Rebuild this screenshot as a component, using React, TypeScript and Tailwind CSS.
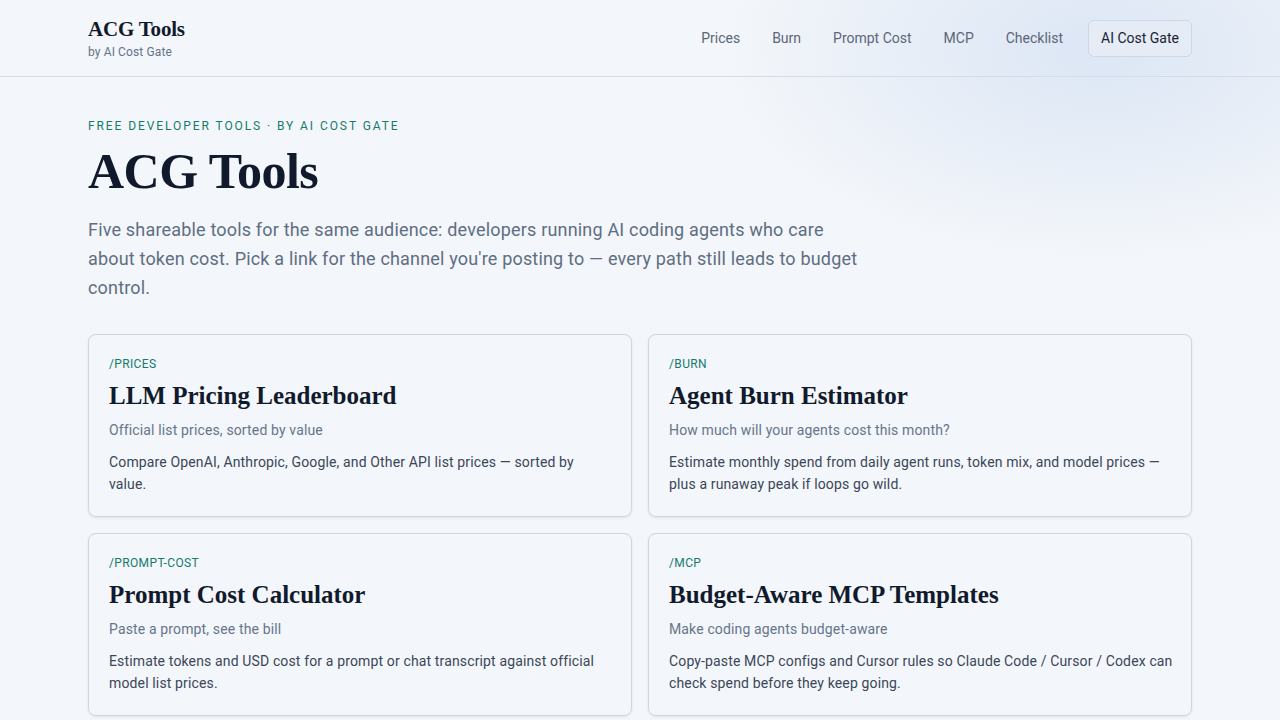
import React from 'react';

const sans = "font-['Roboto','Inter',sans-serif]";
const serif = "font-['Liberation_Serif','DejaVu_Serif',serif]";

const navItems = ['Prices', 'Burn', 'Prompt Cost', 'MCP', 'Checklist'];

const tools = [
  {
    path: '/PRICES',
    title: 'LLM Pricing Leaderboard',
    tagline: 'Official list prices, sorted by value',
    body: 'Compare OpenAI, Anthropic, Google, and Other API list prices — sorted by value.',
  },
  {
    path: '/BURN',
    title: 'Agent Burn Estimator',
    tagline: 'How much will your agents cost this month?',
    body: 'Estimate monthly spend from daily agent runs, token mix, and model prices — plus a runaway peak if loops go wild.',
  },
  {
    path: '/PROMPT-COST',
    title: 'Prompt Cost Calculator',
    tagline: 'Paste a prompt, see the bill',
    body: 'Estimate tokens and USD cost for a prompt or chat transcript against official model list prices.',
  },
  {
    path: '/MCP',
    title: 'Budget-Aware MCP Templates',
    tagline: 'Make coding agents budget-aware',
    body: 'Copy-paste MCP configs and Cursor rules so Claude Code / Cursor / Codex can check spend before they keep going.',
  },
];

export default function App() {
  return (
    <div className={`min-h-screen bg-[#f3f6fa] text-[#0f1b2d] ${sans} relative overflow-hidden`}>
      {/* soft glow top right */}
      <div className="pointer-events-none absolute -top-40 right-[-200px] w-[760px] h-[420px] rounded-full bg-[radial-gradient(ellipse_at_center,rgba(191,210,238,0.45),rgba(243,246,250,0)_70%)]" />

      <header className="relative border-b border-[#d3dce8]">
        <div className="mx-auto w-[1104px] h-[76px] flex items-center justify-between">
          <div className="flex flex-col">
            <span className={`${serif} text-[21px] font-bold leading-[26px] tracking-[-0.2px] text-[#111a2c]`}>ACG Tools</span>
            <span className="text-[12px] leading-[16px] tracking-[0.01em] text-[#64748b] mt-[2px]">by AI Cost Gate</span>
          </div>
          <nav className="flex items-center gap-2 text-[14px] text-[#5b6678]">
            {navItems.map(n => (
              <a key={n} className="px-[12px] py-[7px]">{n}</a>
            ))}
            <a className="ml-[5px] px-[12px] py-[7px] rounded-md border border-[#cfd9e6] bg-[#e6ecf5] text-[#1a2334]">AI Cost Gate</a>
          </nav>
        </div>
      </header>

      <main className="relative mx-auto w-[1104px] pt-[41px]">
        <p className="text-[12px] leading-[16px] tracking-[0.16em] uppercase text-[#167a6e]">Free developer tools · by AI Cost Gate</p>
        <h1 className={`${serif} text-[50px] leading-[56px] font-bold tracking-[-0.5px] text-[#111a2c] mt-[9px]`}>ACG Tools</h1>
        <p className="mt-[16px] max-w-[780px] text-[18px] leading-[29px] tracking-[0.01em] text-[#5f6e82]">
          Five shareable tools for the same audience: developers running AI coding agents who care about token cost. Pick a link for the channel you're posting to — every path still leads to budget control.
        </p>

        <div className="mt-[32px] grid grid-cols-2 gap-4">
          {tools.map(t => (
            <div key={t.path} className="h-[183px] rounded-lg border border-[#cdd7e4] bg-[#f3f6fa] shadow-[0_1px_3px_rgba(15,27,45,0.08)] pl-[20px] pr-[17px] pt-[21px]">
              <p className="text-[12px] leading-[16px] tracking-[0.03em] text-[#167a6e]">{t.path}</p>
              <h2 className={`${serif} mt-[8px] text-[25px] leading-[32px] font-bold text-[#111a2c]`}>{t.title}</h2>
              <p className="mt-[8px] text-[14px] leading-[20px] tracking-[0.01em] text-[#66758a]">{t.tagline}</p>
              <p className="mt-[11px] text-[14px] leading-[22px] tracking-[0.01em] text-[#3b4658]">{t.body}</p>
            </div>
          ))}
        </div>
      </main>
    </div>
  );
}
